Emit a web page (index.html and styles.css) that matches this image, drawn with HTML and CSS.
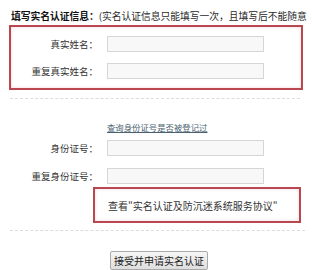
FILE: index.html
```html
<!DOCTYPE html>
<html lang="zh-CN">

<head>
    <meta charset="UTF-8">
    <meta name="viewport" content="width=device-width, initial-scale=1.0">
    <title>实名认证</title>
    <link rel="stylesheet" href="styles.css">
</head>

<body>
    <div class="page">
        <div class="title"><b>填写实名认证信息：</b>(实名认证信息只能填写一次，且填写后不能随意</div>

        <div class="mark-box name-box">
            <div class="row">
                <label class="label">真实姓名：</label>
                <input class="field" type="text">
            </div>
            <div class="row">
                <label class="label">重复真实姓名：</label>
                <input class="field" type="text">
            </div>
        </div>

        <div class="divider"></div>

        <div class="link-row">
            <a class="check-link" href="#">查询身份证号是否被登记过</a>
        </div>

        <div class="id-rows">
            <div class="row">
                <label class="label">身份证号：</label>
                <input class="field" type="text">
            </div>
            <div class="row">
                <label class="label">重复身份证号：</label>
                <input class="field" type="text">
            </div>
        </div>

        <div class="mark-box terms-box">查看"实名认证及防沉迷系统服务协议"</div>

        <div class="divider divider-bottom"></div>

        <div class="submit-row">
            <button class="submit" type="button">接受并申请实名认证</button>
        </div>
    </div>
</body>

</html>
```

FILE: styles.css
```css
html,
body {
    margin: 0;
    background: #ffffff;
    font-family: "Noto Sans CJK SC", "Liberation Sans", sans-serif;
    color: #333333;
    overflow: hidden;
}

.page {
    width: 312px;
    height: 270px;
    overflow: hidden;
}

.title {
    padding: 10px 0 0 11px;
    height: 12px;
    line-height: 12px;
    font-size: 9.8px;
    letter-spacing: -0.05px;
    color: #2a2a2a;
    white-space: nowrap;
    overflow: hidden;
}

.title b {
    color: #111111;
}

.mark-box {
    border: 2px solid #b9474f;
    box-shadow: inset 0 0 3px rgba(230, 150, 160, 0.45);
}

.name-box {
    margin: 3px 0 0 9px;
    width: 290px;
    padding: 9px 0 9px 0;
    display: flex;
    flex-direction: column;
    gap: 11px;
}

.row {
    display: grid;
    grid-template-columns: 87px 157px;
    column-gap: 9px;
    align-items: center;
}

.id-rows {
    padding-left: 11px;
    margin-top: 10px;
    display: flex;
    flex-direction: column;
    gap: 12px;
}

.label {
    text-align: right;
    font-size: 9.5px;
    line-height: 16px;
    color: #333333;
    white-space: nowrap;
}

.field {
    box-sizing: border-box;
    width: 157px;
    height: 16px;
    margin: 0;
    padding: 0 3px;
    border: 1px solid #d6d6d6;
    background: #f8f8f8;
    outline: none;
}

.divider {
    margin: 8px 12px 0 10px;
    border-top: 1px dashed #dcdcdc;
}

.link-row {
    margin-top: 19px;
    padding-left: 107px;
    height: 12px;
    line-height: 12px;
}

.check-link {
    font-size: 8.4px;
    color: #4a6170;
    text-decoration: underline;
    white-space: nowrap;
}

.terms-box {
    margin: 3px 0 0 93px;
    width: 191px;
    height: 12px;
    padding: 11px 0 9px 13px;
    line-height: 12px;
    font-size: 10px;
    color: #333333;
    white-space: nowrap;
}

.divider-bottom {
    margin: 7px 7px 0 10px;
}

.submit-row {
    margin-top: 15px;
    padding-left: 110px;
}

.submit {
    width: 98px;
    height: 19px;
    padding: 0;
    font-family: "Noto Sans CJK SC", sans-serif;
    font-size: 10px;
    line-height: 17px;
    color: #222222;
    border: 1px solid #a9a9a9;
    border-radius: 2px;
    background: linear-gradient(#f6f6f6, #dedede);
}
```
